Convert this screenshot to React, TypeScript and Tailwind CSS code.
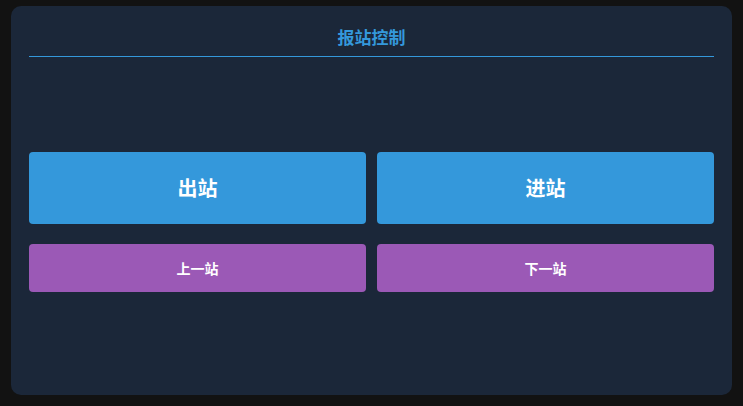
import React from "react";

export default function App() {
  const font = { fontFamily: '"Noto Sans CJK SC", "Noto Sans", sans-serif' };
  return (
    <div className="w-[743px] h-[406px] bg-[#121212] pt-[6px] px-[11px] pb-[11px]" style={font}>
      <div className="h-[389px] rounded-[10px] bg-[#1b2739] px-[18px] pt-[20px] flex flex-col">
        <div className="border-b border-[#3498db] pb-[8px] h-[31px] flex items-center justify-center">
          <span className="text-[17px] leading-[22px] font-bold text-[#3498db]">报站控制</span>
        </div>
        <div className="mt-[95px] grid grid-cols-2 gap-x-[11px] gap-y-[20px]">
          <button className="h-[72px] rounded-[4px] bg-[#3498db] text-white text-[20px] font-bold">出站</button>
          <button className="h-[72px] rounded-[4px] bg-[#3498db] text-white text-[20px] font-bold">进站</button>
          <button className="h-[48px] rounded-[4px] bg-[#9b59b6] text-white text-[14px] font-bold">上一站</button>
          <button className="h-[48px] rounded-[4px] bg-[#9b59b6] text-white text-[14px] font-bold">下一站</button>
        </div>
      </div>
    </div>
  );
}
